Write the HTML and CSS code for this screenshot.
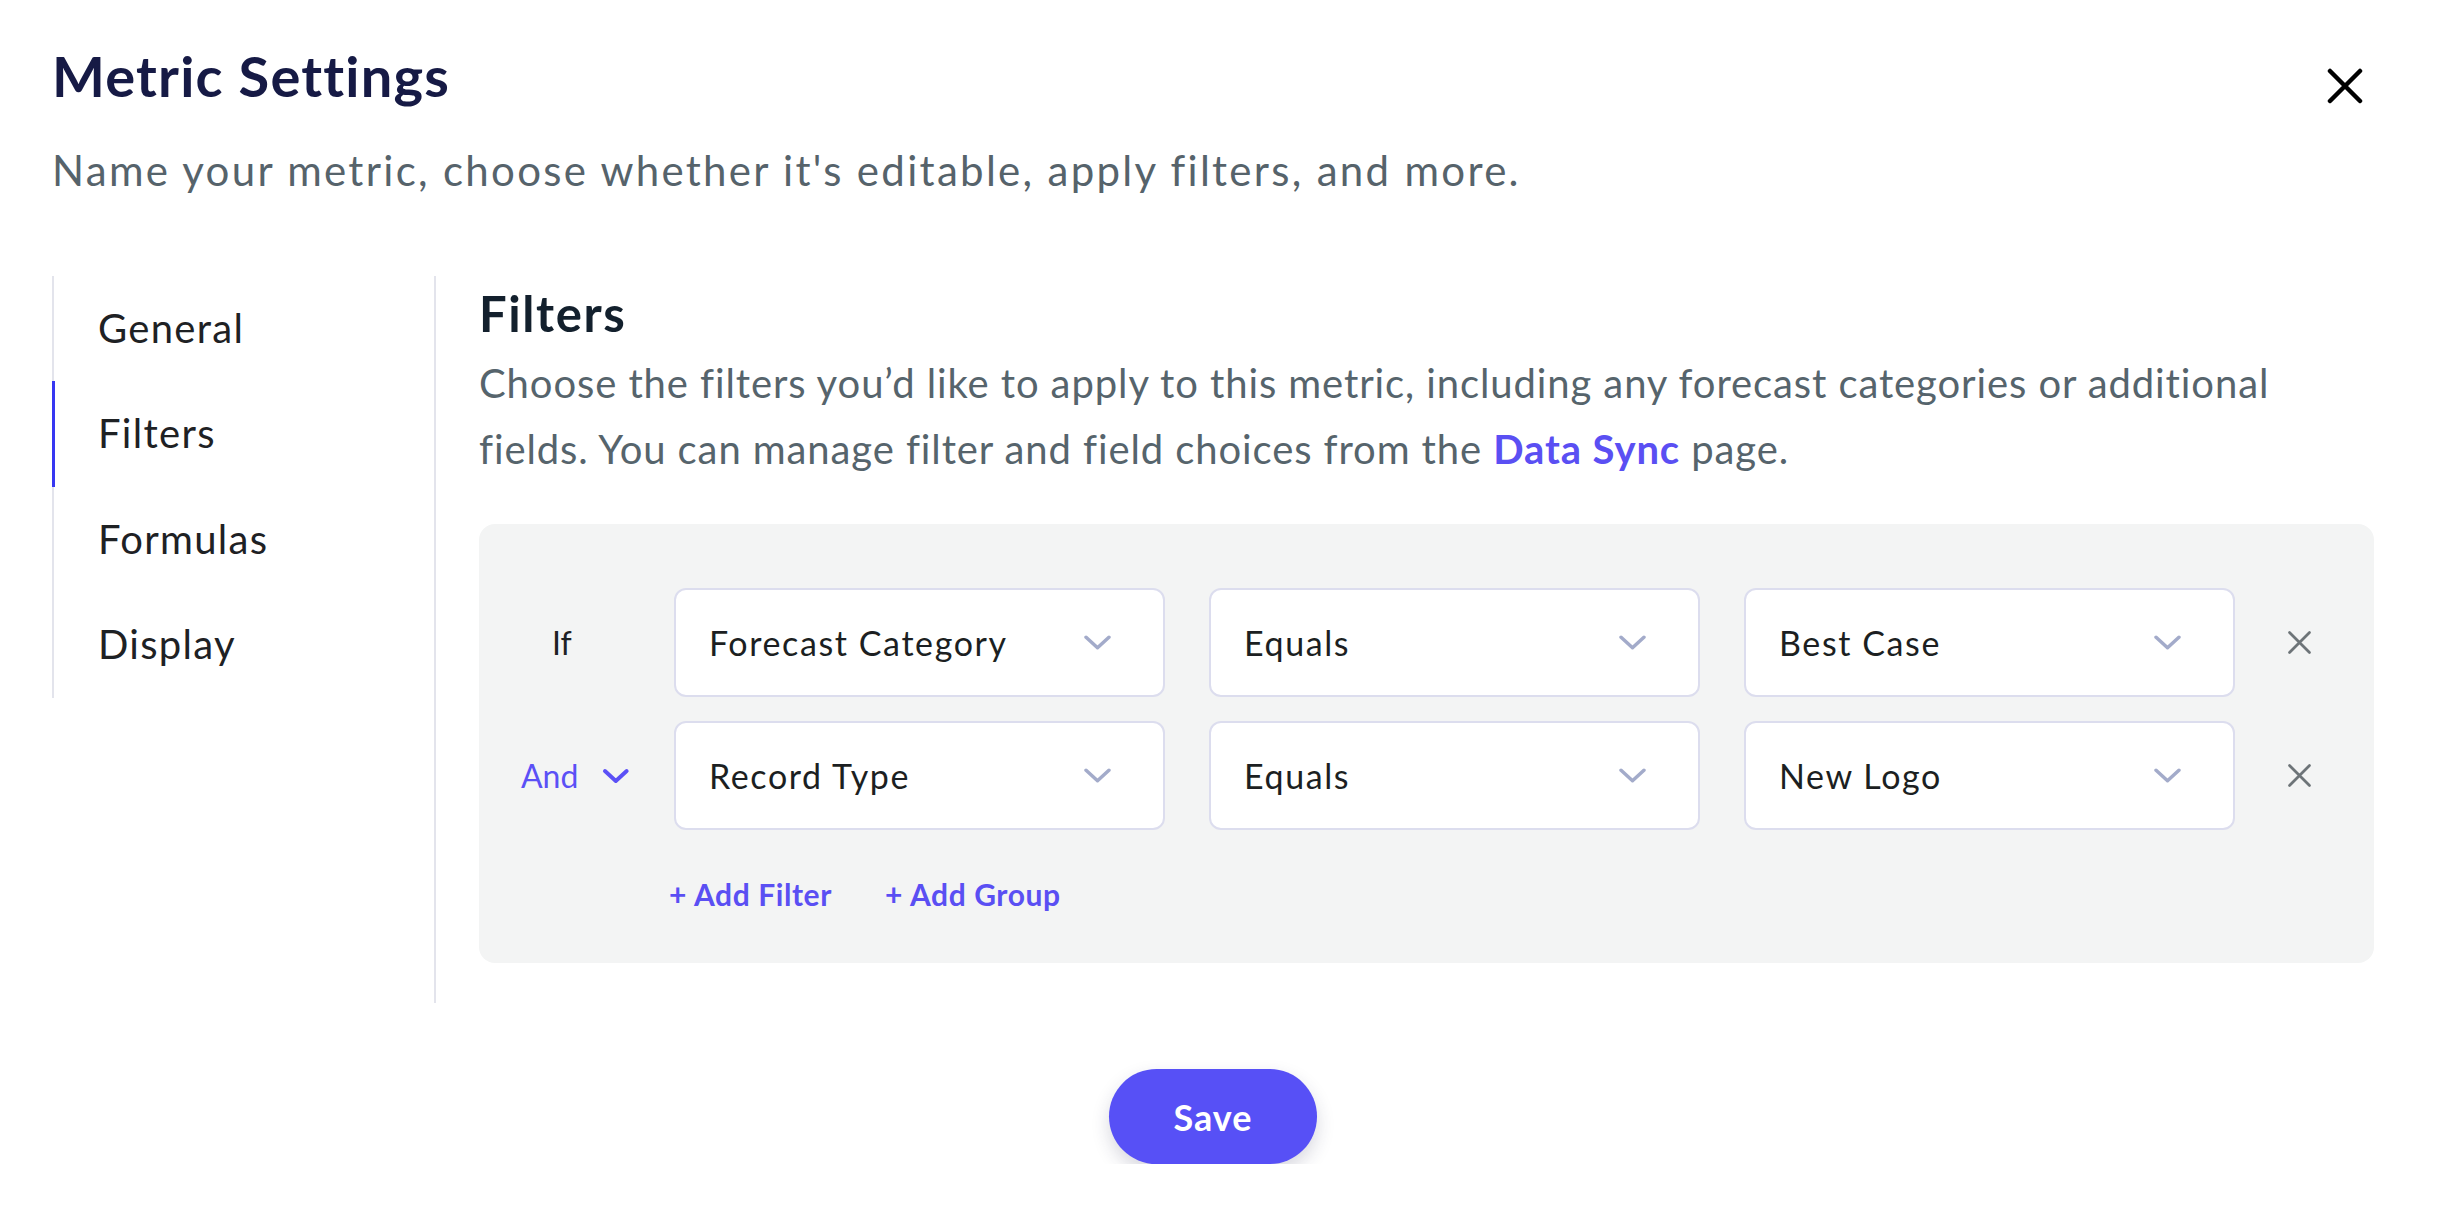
FILE: index.html
```html
<!DOCTYPE html>
<html lang="en">
<head>
  <meta charset="UTF-8">
  <title>Metric Settings</title>
  <link rel="stylesheet" href="styles.css">
</head>
<body>
  <div class="modal">
    <header class="modal-head">
      <div>
        <h1>Metric Settings</h1>
        <p class="subtitle">Name your metric, choose whether it's editable, apply filters, and more.</p>
      </div>
      <button class="close" aria-label="Close">
        <svg width="36" height="36" viewBox="0 0 36 36"><path d="M3 3L33 33M33 3L3 33" stroke="#000" stroke-width="4.5" stroke-linecap="round"/></svg>
      </button>
    </header>

    <div class="modal-body">
      <nav class="tabs">
        <a>General</a>
        <a class="active">Filters</a>
        <a>Formulas</a>
        <a>Display</a>
      </nav>

      <section class="pane">
        <h2>Filters</h2>
        <p class="desc">Choose the filters you’d like to apply to this metric, including any forecast categories or additional<br>fields. You can manage filter and field choices from the <a class="link">Data Sync</a> page.</p>

        <div class="filter-box">
          <div class="filter-row">
            <span class="cond cond-if">If</span>
            <div class="select"><span>Forecast Category</span><svg class="chev" viewBox="0 0 26 14"><path d="M2 2L13 12L24 2"/></svg></div>
            <div class="select"><span>Equals</span><svg class="chev" viewBox="0 0 26 14"><path d="M2 2L13 12L24 2"/></svg></div>
            <div class="select"><span>Best Case</span><svg class="chev" viewBox="0 0 26 14"><path d="M2 2L13 12L24 2"/></svg></div>
            <button class="remove"><svg viewBox="0 0 20 20"><path d="M2 2L18 18M18 2L2 18"/></svg></button>
          </div>
          <div class="filter-row">
            <span class="cond cond-and">And <svg class="and-chev" viewBox="0 0 28 16"><path d="M3 3L14 13L25 3"/></svg></span>
            <div class="select"><span>Record Type</span><svg class="chev" viewBox="0 0 26 14"><path d="M2 2L13 12L24 2"/></svg></div>
            <div class="select"><span>Equals</span><svg class="chev" viewBox="0 0 26 14"><path d="M2 2L13 12L24 2"/></svg></div>
            <div class="select"><span>New Logo</span><svg class="chev" viewBox="0 0 26 14"><path d="M2 2L13 12L24 2"/></svg></div>
            <button class="remove"><svg viewBox="0 0 20 20"><path d="M2 2L18 18M18 2L2 18"/></svg></button>
          </div>
          <div class="add-links">
            <a>+ Add Filter</a>
            <a>+ Add Group</a>
          </div>
        </div>
      </section>
    </div>

    <div class="modal-foot">
      <button class="save">Save</button>
    </div>
  </div>
</body>
</html>
```

FILE: styles.css
```css
body, html {
  margin: 0;
  padding: 0;
  background: #fff;
  font-family: 'Lato', 'Liberation Sans', sans-serif;
}
.modal {
  padding: 42px 88px 0 52px;
}
.modal-head {
  display: flex;
  justify-content: space-between;
  align-items: flex-start;
}
h1 {
  margin: 0;
  font-size: 56px;
  line-height: 1.2;
  font-weight: 700;
  letter-spacing: 1.2px;
  color: #161a45;
}
.subtitle {
  margin: 36px 0 0;
  font-size: 42px;
  line-height: 1.2;
  letter-spacing: 2.3px;
  color: #56636b;
}
.close {
  background: none;
  border: none;
  padding: 0;
  margin: 26px 11px 0 0;
  width: 36px;
  height: 36px;
  cursor: pointer;
}
.modal-body {
  display: flex;
  margin-top: 80px;
}
.tabs {
  width: 380px;
  flex-shrink: 0;
  align-self: flex-start;
  display: flex;
  flex-direction: column;
  border-left: 2px solid #e3e4ec;
}
.tabs a {
  display: block;
  padding-left: 43px;
  margin-left: -2px;
  border-left: 3px solid transparent;
  font-size: 40px;
  line-height: 105.5px;
  letter-spacing: 1.3px;
  color: #1e2124;
}
.tabs a.active {
  border-left-color: #3737f2;
}
.pane {
  flex: 1;
  border-left: 2px solid #e3e4ec;
  padding: 8px 0 40px 43px;
}
h2 {
  margin: 0;
  font-size: 49px;
  line-height: 1.2;
  font-weight: 700;
  letter-spacing: 1.6px;
  color: #13202d;
}
.desc {
  margin: 8px 0 0;
  font-size: 40px;
  line-height: 66px;
  letter-spacing: 0.9px;
  color: #56646c;
}
.link {
  color: #5a4ff3;
  font-weight: 700;
}
.filter-box {
  margin-top: 42px;
  background: #f3f4f4;
  border-radius: 16px;
  padding: 64px 0 51px 42px;
}
.filter-row {
  display: grid;
  grid-template-columns: 109px repeat(3, 491px) 40px;
  column-gap: 44px;
  align-items: center;
  margin-bottom: 24px;
}
.cond {
  font-size: 32px;
  white-space: nowrap;
  display: flex;
  align-items: center;
}
.cond-if {
  color: #1e2124;
  padding-left: 31px;
}
.cond-and {
  color: #5b50f6;
}
.and-chev {
  width: 28px;
  height: 16px;
  margin-left: 24px;
  fill: none;
  stroke: #5b50f6;
  stroke-width: 4;
  stroke-linecap: round;
  stroke-linejoin: round;
}
.select {
  height: 109px;
  box-sizing: border-box;
  border: 2px solid #dcddee;
  border-radius: 12px;
  background: #fff;
  display: flex;
  align-items: center;
  justify-content: space-between;
  padding: 0 52px 0 33px;
  font-size: 34px;
  letter-spacing: 1.6px;
  color: #1c1f22;
}
.chev {
  width: 27px;
  height: 15px;
  fill: none;
  stroke: #a3abca;
  stroke-width: 3.4;
  stroke-linecap: round;
  stroke-linejoin: round;
}
.remove {
  background: none;
  border: none;
  padding: 0;
  width: 40px;
  height: 40px;
  display: flex;
  align-items: center;
  justify-content: center;
  cursor: pointer;
}
.remove svg {
  width: 25px;
  height: 25px;
  fill: none;
  stroke: #6d7478;
  stroke-width: 2.2;
  stroke-linecap: round;
}
.add-links {
  display: flex;
  gap: 53px;
  margin: 46px 0 0 148px;
  font-size: 30px;
  line-height: 1.2;
  font-weight: 700;
  letter-spacing: 0.6px;
  color: #5a4ff3;
}
.modal-foot {
  display: flex;
  justify-content: center;
  padding-top: 66px;
}
.save {
  width: 208px;
  height: 95px;
  border: none;
  border-radius: 48px;
  background: #5750f6;
  color: #fff;
  font-family: 'Lato', sans-serif;
  font-size: 36px;
  font-weight: 700;
  letter-spacing: 1px;
  box-shadow: 0 8px 18px rgba(40, 40, 80, 0.18);
  cursor: pointer;
}
```
